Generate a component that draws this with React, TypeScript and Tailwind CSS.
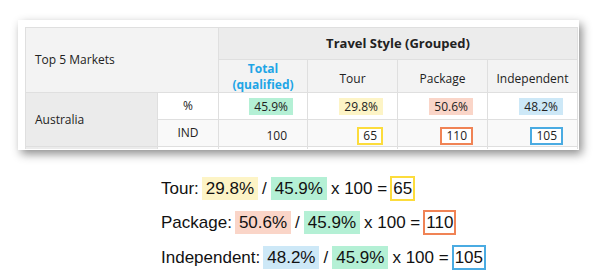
import React from "react";

const tableFont = { fontFamily: '"Open Sans", "Noto Sans", sans-serif' };

function Hl({ bg, children }: { bg: string; children: React.ReactNode }) {
  return <span className={`${bg} inline-block px-[5px] leading-[17px]`}>{children}</span>;
}

function Bx({ border, children }: { border: string; children: React.ReactNode }) {
  return (
    <span className={`${border} inline-block border-2 px-[4px] leading-[14px]`}>
      {children}
    </span>
  );
}

function FHl({ bg, children }: { bg: string; children: React.ReactNode }) {
  return <span className={`${bg} inline-flex h-[23px] items-center px-[4px]`}>{children}</span>;
}

function FBx({ border, children }: { border: string; children: React.ReactNode }) {
  return (
    <span className={`${border} ml-[3px] inline-flex h-[25px] items-center border-2 px-[1px]`}>
      {children}
    </span>
  );
}

function Formula({
  label,
  part,
  partBg,
  result,
  border,
}: {
  label: string;
  part: string;
  partBg: string;
  result: string;
  border: string;
}) {
  return (
    <div className="flex h-[34.5px] items-center">
      <span className="mr-[3px]">{label}</span>
      <FHl bg={partBg}>{part}</FHl>
      <span className="mx-[4px]">/</span>
      <FHl bg="bg-[#b4f0d5]">45.9%</FHl>
      <span className="ml-[4px] whitespace-pre">x 100 =</span>
      <FBx border={border}>{result}</FBx>
    </div>
  );
}

export default function App() {
  const cell = "bg-white flex items-center justify-end pr-[14px] text-[12px] text-[#222]";
  const cellAlt = "bg-[#f9f9f9] flex items-end justify-end pr-[14px] pb-[1px] text-[12px] text-[#222]";

  return (
    <div className="w-[612px] h-[273px] bg-white overflow-hidden pt-[20px] pl-[18px]">
      <div className="w-[561px] bg-white pl-[7px] pt-[7px] pr-px pb-px shadow-[3px_4px_9px_rgba(0,0,0,0.45)]">
        <div
          style={tableFont}
          className="grid w-[553px] grid-cols-[131px_60px_88px_89px_89px_89px] grid-rows-[31px_32px_26px_26px_2px] gap-px bg-[#dfdfdf] p-px pb-0"
        >
          <div className="col-span-2 row-span-2 flex items-center bg-[#f3f3f3] pl-[9px] text-[12px] text-[#222]">
            Top 5 Markets
          </div>
          <div className="col-span-4 flex items-center justify-center bg-[#ececec] text-[13px] font-bold text-[#222]">
            Travel Style (Grouped)
          </div>
          <div className="flex flex-col items-center justify-center bg-[#f3f3f3] pt-[2px] text-[12px] font-bold leading-[16px] text-[#1ea5e6]">
            <span>Total</span>
            <span>(qualified)</span>
          </div>
          <div className="flex items-center justify-center bg-[#f3f3f3] pt-[5px] text-[12px] text-[#222]">Tour</div>
          <div className="flex items-center justify-center bg-[#f3f3f3] pt-[5px] text-[12px] text-[#222]">Package</div>
          <div className="flex items-center justify-center bg-[#f3f3f3] pt-[5px] text-[12px] text-[#222]">Independent</div>

          <div className="row-span-2 flex items-center bg-[#ebebeb] pl-[9px] text-[12px] text-[#222]">Australia</div>
          <div className="flex items-center justify-center bg-white text-[12px] text-[#222]">%</div>
          <div className={cell}>
            <Hl bg="bg-[#b4f0d5]">45.9%</Hl>
          </div>
          <div className={cell}>
            <Hl bg="bg-[#fdf4c6]">29.8%</Hl>
          </div>
          <div className={cell}>
            <Hl bg="bg-[#fad5c8]">50.6%</Hl>
          </div>
          <div className={cell}>
            <Hl bg="bg-[#cde8f7]">48.2%</Hl>
          </div>

          <div className="flex items-center justify-center bg-[#f9f9f9] text-[12px] text-[#222]">IND</div>
          <div className={cellAlt}>
            <Bx border="border-transparent">100</Bx>
          </div>
          <div className={cellAlt}>
            <Bx border="border-[#fcdc3c] bg-white">65</Bx>
          </div>
          <div className={cellAlt}>
            <Bx border="border-[#f08355] bg-white">110</Bx>
          </div>
          <div className={cellAlt}>
            <Bx border="border-[#4aabe2] bg-white">105</Bx>
          </div>

          <div className="bg-[#ebebeb]" />
          <div className="bg-white" />
          <div className="bg-white" />
          <div className="bg-white" />
          <div className="bg-white" />
          <div className="bg-white" />
        </div>
      </div>

      <div
        className="mt-[21px] ml-[143px] flex flex-col text-[17px] text-[#111]"
        style={{ fontFamily: '"Liberation Sans", Arial, sans-serif' }}
      >
        <Formula label="Tour:" part="29.8%" partBg="bg-[#fdf4c6]" result="65" border="border-[#fcdc3c]" />
        <Formula label="Package:" part="50.6%" partBg="bg-[#fad5c8]" result="110" border="border-[#f08355]" />
        <Formula label="Independent:" part="48.2%" partBg="bg-[#cde8f7]" result="105" border="border-[#4aabe2]" />
      </div>
    </div>
  );
}
